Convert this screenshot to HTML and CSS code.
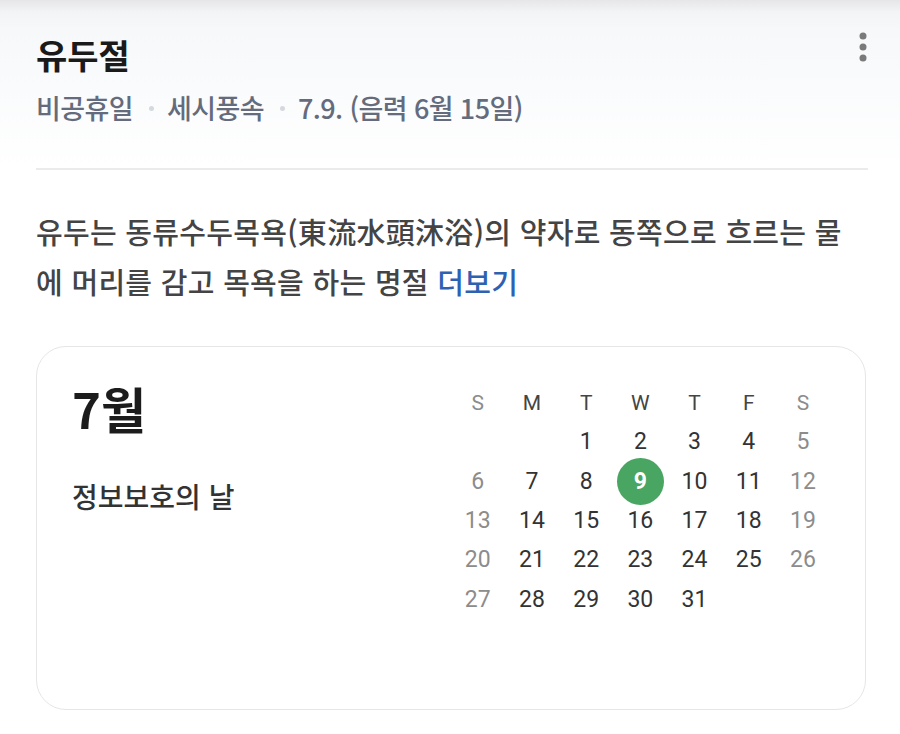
FILE: index.html
```html
<!DOCTYPE html>
<html lang="ko">
<head>
<meta charset="utf-8">
<title>유두절</title>
<link rel="stylesheet" href="styles.css">
</head>
<body>
<div class="page">
  <div class="top">
    <div class="head">
      <h1 class="title">유두절</h1>
      <svg class="menu" width="10" height="30" viewBox="0 0 10 30" aria-hidden="true">
        <circle cx="5" cy="4" r="3.5" fill="#7a7a7a"/>
        <circle cx="5" cy="15" r="3.5" fill="#7a7a7a"/>
        <circle cx="5" cy="26" r="3.5" fill="#7a7a7a"/>
      </svg>
    </div>
    <div class="meta">
      <span>비공휴일</span><span class="sep"></span><span>세시풍속</span><span class="sep"></span><span>7.9. (음력 6월 15일)</span>
    </div>
    <div class="divider"></div>
  </div>

  <p class="desc">유두는 동류수두목욕(東流水頭沐浴)의 약자로 동쪽으로 흐르는 물에 머리를 감고 목욕을 하는 명절 <a class="more" href="#">더보기</a></p>

  <div class="card">
    <div class="left">
      <div class="month">7월</div>
      <div class="event">정보보호의 날</div>
    </div>
    <div class="cal">
      <div class="c hd we">S</div><div class="c hd">M</div><div class="c hd">T</div><div class="c hd">W</div><div class="c hd">T</div><div class="c hd">F</div><div class="c hd we">S</div>
      <div class="c"></div><div class="c"></div><div class="c">1</div><div class="c">2</div><div class="c">3</div><div class="c">4</div><div class="c we">5</div>
      <div class="c we">6</div><div class="c">7</div><div class="c">8</div><div class="c"><span class="today">9</span></div><div class="c">10</div><div class="c">11</div><div class="c we">12</div>
      <div class="c we">13</div><div class="c">14</div><div class="c">15</div><div class="c">16</div><div class="c">17</div><div class="c">18</div><div class="c we">19</div>
      <div class="c we">20</div><div class="c">21</div><div class="c">22</div><div class="c">23</div><div class="c">24</div><div class="c">25</div><div class="c we">26</div>
      <div class="c we">27</div><div class="c">28</div><div class="c">29</div><div class="c">30</div><div class="c">31</div><div class="c"></div><div class="c"></div>
    </div>
  </div>
</div>
</body>
</html>
```

FILE: styles.css
```css
* { box-sizing: border-box; }
html, body { margin: 0; padding: 0; background: #fff; }
body {
  font-family: "Noto Sans CJK KR", "Noto Sans", sans-serif;
  width: 900px;
  height: 734px;
  overflow: hidden;
}
.top {
  background: linear-gradient(to bottom, #e6e6e8 0px, #f3f4f6 12px, #f7f8fa 30px, #fafbfc 90px, #ffffff 170px);
  padding: 0 34px 0 36px;
}
.head {
  display: flex;
  justify-content: space-between;
  align-items: flex-start;
  padding-top: 34px;
}
.title {
  margin: 0;
  font-size: 34px;
  font-weight: 700;
  line-height: 42px;
  color: #1a1a1a;
}
.menu { margin-top: -2px; margin-right: -2px; }
.meta {
  display: flex;
  align-items: center;
  margin-top: 16px;
  font-size: 27px;
  font-weight: 500;
  line-height: 32px;
  color: #636b7c;
  letter-spacing: -0.6px;
}
.sep {
  width: 5px;
  height: 5px;
  border-radius: 50%;
  background: #d5d8de;
  margin: 0 13px 0 16px;
}
.divider {
  height: 2px;
  background: #ebebec;
  margin-top: 44px;
  margin-right: -2px;
}
.desc {
  margin: 36px 48px 0 36px;
  font-size: 29px;
  font-weight: 500;
  line-height: 50px;
  color: #444;
  letter-spacing: 0.3px;
  word-break: break-all;
}
.more { color: #2d62b3; text-decoration: none; }
.card {
  margin: 40px 34px 0 36px;
  height: 364px;
  border: 1.5px solid #e6e6e6;
  border-radius: 30px;
  display: flex;
  justify-content: space-between;
  padding: 36px 35px 0 35px;
}
.month {
  font-size: 49px;
  font-weight: 700;
  line-height: 50px;
  color: #1c1c1c;
}
.event {
  margin-top: 46px;
  font-size: 28px;
  font-weight: 500;
  line-height: 34px;
  color: #333;
}
.cal {
  display: grid;
  grid-template-columns: repeat(7, 54.2px);
  grid-auto-rows: 39.3px;
  font-family: Roboto, "Noto Sans", sans-serif;
  font-size: 23px;
  color: #333;
}
.c {
  display: flex;
  align-items: center;
  justify-content: center;
}
.hd { font-size: 21px; color: #444; }
.we { color: #8c8c8c; }
.today {
  width: 47px;
  height: 47px;
  flex: none;
  border-radius: 50%;
  background: #48a562;
  color: #fff;
  font-weight: 700;
  display: flex;
  align-items: center;
  justify-content: center;
}
```
